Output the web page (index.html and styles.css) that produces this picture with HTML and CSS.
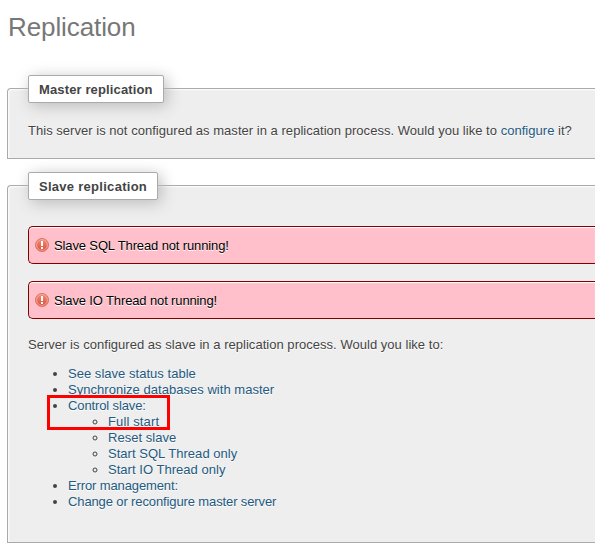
FILE: index.html
```html
<!DOCTYPE html>
<html lang="en">
<head>
<meta charset="utf-8">
<title>Replication</title>
<link rel="stylesheet" href="styles.css">
</head>
<body>
<svg class="defs" width="0" height="0" aria-hidden="true">
  <defs>
    <linearGradient id="disc" x1="0" y1="0" x2="0" y2="1">
      <stop offset="0" stop-color="#f09078"/>
      <stop offset="1" stop-color="#dc4b3c"/>
    </linearGradient>
    <symbol id="error" viewBox="0 0 14 14">
      <circle cx="7" cy="7" r="6.5" fill="url(#disc)" stroke="#de7260"/>
      <circle cx="7" cy="7" r="5.4" fill="none" stroke="#f8b5a4" stroke-width=".8"/>
      <path d="M6 3h2v5H6zM6 9h2v2H6z" fill="#fff"/>
    </symbol>
  </defs>
</svg>
<h1 class="title">Replication</h1>
<section class="panel master">
  <h2 class="legend">Master replication</h2>
  <p class="text intro">This server is not configured as master in a replication process. Would you like to <a href="#">configure</a> it?</p>
</section>
<section class="panel slave">
  <h2 class="legend legend-slave">Slave replication</h2>
  <div class="error"><svg class="icon"><use href="#error"/></svg><span class="message">Slave SQL Thread not running!</span></div>
  <div class="error"><svg class="icon"><use href="#error"/></svg><span class="message">Slave IO Thread not running!</span></div>
  <p class="text status">Server is configured as slave in a replication process. Would you like to:</p>
  <ul class="actions">
    <li><a href="#">See slave status table</a></li>
    <li><a href="#">Synchronize databases with master</a></li>
    <li class="control"><a class="tight" href="#">Control slave:</a>
      <ul>
        <li><a class="wide" href="#">Full start</a></li>
        <li><a href="#">Reset slave</a></li>
        <li><a href="#">Start SQL Thread only</a></li>
        <li><a href="#">Start IO Thread only</a></li>
      </ul>
      <span class="highlight"></span>
    </li>
    <li><a class="tight" href="#">Error management:</a></li>
    <li><a class="tight" href="#">Change or reconfigure master server</a></li>
  </ul>
</section>
</body>
</html>
```
FILE: styles.css
```css
* { box-sizing: border-box; }
html { overflow: hidden; }
body {
  margin: 0 0 0 7px;
  background: #fff;
  color: #444;
  font: 13px/16px "Liberation Sans", Arial, sans-serif;
  letter-spacing: .03px;
}
.defs { position: absolute; }
a { color: #235a81; text-decoration: none; }
.title {
  margin: 0;
  padding: 11px 0 0 1px;
  height: 88px;
  color: #777;
  font-size: 26px;
  line-height: 32px;
  font-weight: 400;
  letter-spacing: -.1px;
}
.panel {
  border: 1px solid #aaa;
  border-right: 0;
  border-radius: 4px 0 0 0;
  background: #eee;
  padding-left: 20px;
  box-shadow: inset 1px 1px 2px #fff;
  text-shadow: 0 1px 0 #fff;
}
.master { height: 71px; margin-bottom: 26px; }
.slave { height: 358px; }
.legend {
  width: 136px;
  height: 28px;
  margin: -14px 0 0;
  padding-left: 10px;
  border: 1px solid #aaa;
  border-radius: 2px;
  background: #fff;
  box-shadow: 3px 3px 15px #bbb;
  font-size: 13px;
  line-height: 27px;
  letter-spacing: .13px;
}
.legend-slave { width: 130px; letter-spacing: .28px; }
.text { margin: 0; white-space: nowrap; }
.intro { padding-top: 20px; }
.error {
  display: flex;
  align-items: center;
  height: 38px;
  margin-top: 17px;
  padding-left: 6px;
  border: 1px solid maroon;
  border-right: 0;
  border-radius: 5px 0 0 5px;
  background: #ffc0cb;
  box-shadow: inset 0 1px 1px #fff;
  color: #000;
  letter-spacing: -.13px;
}
.message { padding-top: 1px; }
.legend-slave + .error { margin-top: 26px; }
.icon { width: 14px; height: 14px; margin-right: 5px; }
.status { margin-top: 18px; }
.actions { margin: 13px 0 0; padding-left: 40px; }
.actions ul { margin: 0; padding-left: 40px; }
.tight { letter-spacing: -.12px; }
.wide { letter-spacing: .13px; }
.control { position: relative; }
.highlight {
  position: absolute;
  left: -21px;
  top: -3px;
  width: 123px;
  height: 35px;
  border: 3px solid red;
}
```
